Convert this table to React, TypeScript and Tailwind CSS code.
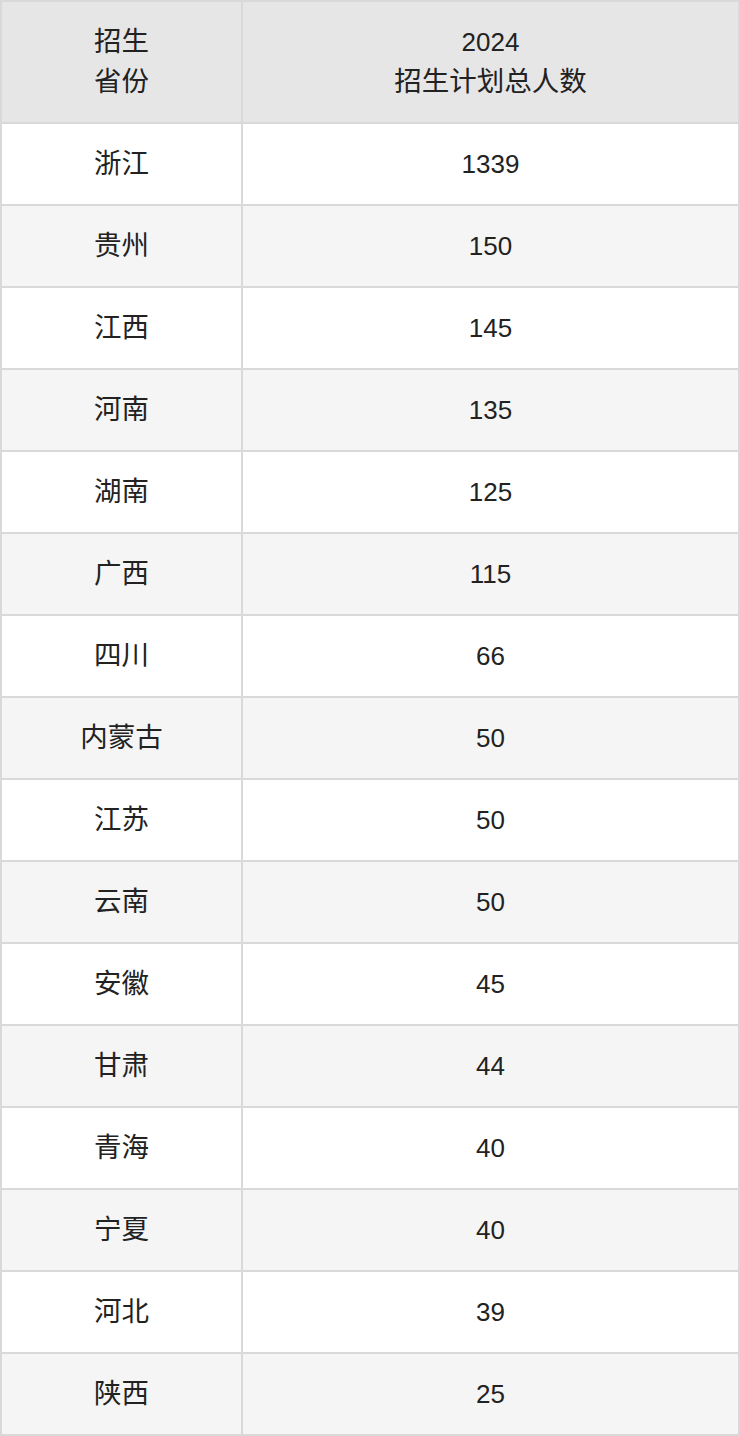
import React from "react";

const rows: [string, string][] = [
  ["浙江", "1339"],
  ["贵州", "150"],
  ["江西", "145"],
  ["河南", "135"],
  ["湖南", "125"],
  ["广西", "115"],
  ["四川", "66"],
  ["内蒙古", "50"],
  ["江苏", "50"],
  ["云南", "50"],
  ["安徽", "45"],
  ["甘肃", "44"],
  ["青海", "40"],
  ["宁夏", "40"],
  ["河北", "39"],
  ["陕西", "25"],
];

export default function App() {
  return (
    <div
      className="w-[740px] bg-white text-[#222] text-[26px]"
      style={{ fontFamily: '"Liberation Sans", "Noto Sans CJK SC", sans-serif' }}
    >
      <div className="grid grid-cols-[241px_497px] border-l-2 border-t-2 border-[#d9d9d9]">
        <div className="h-[122px] bg-[#e6e6e6] border-r-2 border-b-2 border-[#d9d9d9] flex items-center justify-center text-center leading-[40px]">
          <div className="text-[27.5px]">
            招生
            <br />
            省份
          </div>
        </div>
        <div className="h-[122px] bg-[#e6e6e6] border-r-2 border-b-2 border-[#d9d9d9] flex items-center justify-center text-center leading-[40px]">
          <div>
            2024
            <br />
            <span className="text-[27.5px]">招生计划总人数</span>
          </div>
        </div>
        {rows.map(([p, n], i) => {
          const bg = i % 2 === 1 ? "bg-[#f5f5f5]" : "bg-white";
          return (
            <React.Fragment key={i}>
              <div
                className={`h-[82px] ${bg} border-r-2 border-b-2 border-[#d9d9d9] flex items-center justify-center text-[27.5px]`}
              >
                {p}
              </div>
              <div
                className={`h-[82px] ${bg} border-r-2 border-b-2 border-[#d9d9d9] flex items-center justify-center`}
              >
                {n}
              </div>
            </React.Fragment>
          );
        })}
      </div>
    </div>
  );
}
